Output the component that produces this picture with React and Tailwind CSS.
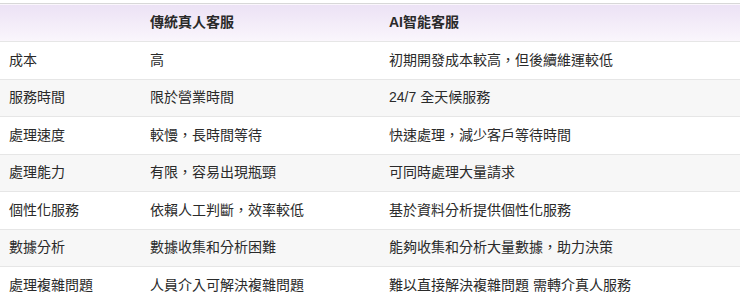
const ROWS = [
  ['成本', '高', '初期開發成本較高，但後續維運較低'],
  ['服務時間', '限於營業時間', '24/7 全天候服務'],
  ['處理速度', '較慢，長時間等待', '快速處理，減少客戶等待時間'],
  ['處理能力', '有限，容易出現瓶頸', '可同時處理大量請求'],
  ['個性化服務', '依賴人工判斷，效率較低', '基於資料分析提供個性化服務'],
  ['數據分析', '數據收集和分析困難', '能夠收集和分析大量數據，助力決策'],
  ['處理複雜問題', '人員介入可解決複雜問題', '難以直接解決複雜問題 需轉介真人服務'],
];

export default function App() {
  return (
    <div
      className="w-[740px] h-[303px] overflow-hidden bg-white pt-[3px] text-[14px] text-[#2a2a2a]"
      style={{ fontFamily: '"Liberation Sans", "Noto Sans CJK TC", sans-serif' }}
    >
      <table className="w-full table-fixed border-collapse">
        <colgroup>
          <col className="w-[140px]" />
          <col className="w-[240px]" />
          <col />
        </colgroup>
        <thead>
          <tr className="h-[38px] border-t border-b border-t-[#d8d8d8] border-b-[#e6e6e6] bg-gradient-to-b from-[#ece2f5] to-[#faf6fc]">
            <th className="px-[9px]" />
            <th className="px-[10px] text-left font-bold">傳統真人客服</th>
            <th className="px-[9px] text-left font-bold">AI智能客服</th>
          </tr>
        </thead>
        <tbody>
          {ROWS.map((r, i) => (
            <tr
              key={r[0]}
              className={`h-[37.5px] border-b border-[#e6e6e6] ${i % 2 === 1 ? 'bg-[#f7f7f7]' : 'bg-white'}`}
            >
              <td className="px-[9px]">{r[0]}</td>
              <td className="px-[10px]">{r[1]}</td>
              <td className="px-[9px]">{r[2]}</td>
            </tr>
          ))}
        </tbody>
      </table>
    </div>
  );
}
